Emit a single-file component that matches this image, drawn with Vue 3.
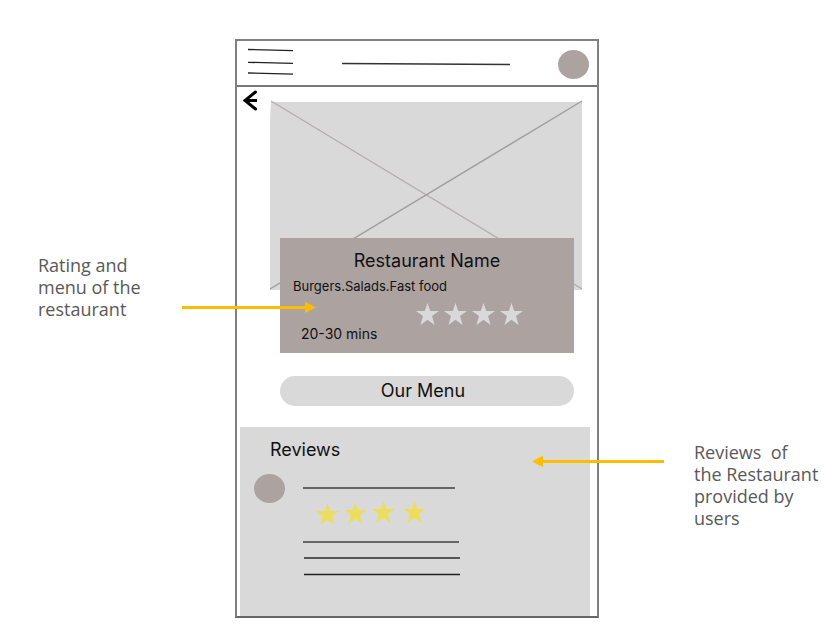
<script setup>
const heroStars = [1, 2, 3, 4]
const star = '11.5,0 14.2,8 23,8 16,13 18.6,22 11.5,16.700 4.400,22 7,13 0,8 8.800,8'
const reviewStars = [
  { x: 0, y: 2 },
  { x: 28, y: 1 },
  { x: 56, y: 0 },
  { x: 87, y: 0 },
]
</script>

<template>
  <div class="board">
    <aside class="note note-left">
      <p>Rating and<br />menu of the<br />restaurant</p>
      <svg class="arrow arrow-right" width="134" height="12" viewBox="0 0 134 12" aria-hidden="true">
        <path d="M0 5H123V0.500L134 6.500L123 12V8H0Z" fill="#fbbc04" />
      </svg>
    </aside>

    <main class="phone">
      <header class="topbar">
        <button class="menu" type="button" aria-label="Open navigation">
          <svg width="46" height="28" viewBox="0 0 46 28" fill="none" stroke="#222" stroke-width="1.3">
            <path d="M0 1.500L45 2.600M0 14.300L45 15.300M0 25L45 26.200" />
          </svg>
        </button>
        <svg class="title-line" width="168" height="4" viewBox="0 0 168 4" aria-hidden="true">
          <path d="M0 1.500L168 2.500" stroke="#333" stroke-width="1.400" />
        </svg>
        <span class="avatar"></span>
      </header>

      <section class="intro">
        <a class="back" href="#" aria-label="Back">
          <svg width="15" height="21" viewBox="0 0 15 21" fill="none" stroke="#000" stroke-width="3">
            <path d="M12.500 2L2 10.500L12.500 19" stroke-linecap="round" />
            <path d="M2 10.500H14" />
          </svg>
        </a>
        <svg class="photo" viewBox="0 0 313 190" preserveAspectRatio="none" role="img" aria-label="Restaurant photo">
          <path d="M1 2H313V190H0V20Z" fill="#d9d9d9" />
          <path d="M1 1L313 189" stroke="#b3adac" stroke-width="1.300" />
          <path d="M313 1L0 189" stroke="#a09e9e" stroke-width="1.400" />
        </svg>
      </section>

      <section class="card">
        <h1>Restaurant Name</h1>
        <p class="tags">Burgers.Salads.Fast food</p>
        <div class="rating" role="img" aria-label="Four stars">
          <svg v-for="n in heroStars" :key="n" width="23" height="22" viewBox="0 0 23 22">
            <polygon :points="star" fill="#d9d9d9" />
          </svg>
        </div>
        <p class="time">20-30 mins</p>
      </section>

      <button class="our-menu" type="button">Our Menu</button>

      <section class="reviews">
        <h2>Reviews</h2>
        <article class="review">
          <span class="avatar"></span>
          <div class="review-body">
            <hr class="name-line" />
            <svg class="review-stars" width="110" height="24" viewBox="0 0 110 24" role="img" aria-label="Four stars">
              <polygon
                v-for="s in reviewStars"
                :key="s.x"
                :points="star"
                :transform="`translate(${s.x} ${s.y})`"
                fill="#ecdd5b"
              />
            </svg>
            <svg class="copy" width="157" height="36" viewBox="0 0 157 36" fill="none" aria-hidden="true">
              <path d="M0 2H156" stroke="#666" stroke-width="2" />
              <path d="M1 18H157" stroke="#555" stroke-width="2" />
              <path d="M1 34.500H157" stroke="#222" stroke-width="1.400" />
            </svg>
          </div>
        </article>
      </section>
    </main>

    <aside class="note note-right">
      <p>Reviews&nbsp; of<br />the Restaurant<br />provided by<br />users</p>
      <svg class="arrow arrow-left" width="132" height="12" viewBox="0 0 132 12" aria-hidden="true">
        <path d="M132 5H11V0.500L0 6.500L11 12V8H132Z" fill="#fbbc04" />
      </svg>
    </aside>
  </div>
</template>

<style>
body {
  margin: 0;
  background: #fff;
}
</style>

<style scoped>
* {
  box-sizing: border-box;
}

.board {
  display: grid;
  grid-template-columns: 235fr 364px 234fr;
  align-items: start;
  padding: 39px 0 18px;
}

h1,
h2,
p {
  margin: 0;
  font-weight: 400;
}

button {
  padding: 0;
  border: 0;
  background: none;
  font: inherit;
  color: inherit;
}

svg {
  display: block;
}

.note {
  position: relative;
  z-index: 1;
  font: 300 18px/22px "Open Sans", sans-serif;
  color: #595959;
  white-space: nowrap;
}

.note-left {
  padding: 215px 0 0 38px;
}

.note-right {
  padding: 402px 0 0 95px;
}

.arrow {
  position: absolute;
}

.arrow-right {
  right: -81px;
  top: 262px;
}

.arrow-left {
  left: -67px;
  top: 416px;
}

.phone {
  border: 2px solid #808080;
  border-bottom-color: #666;
  background: #fff;
  font-family: Inter, sans-serif;
  color: #111;
}

.topbar {
  display: flex;
  align-items: center;
  justify-content: space-between;
  height: 46px;
  padding: 2px 8px 0 11px;
  border-bottom: 2px solid #777;
}

.menu {
  padding-bottom: 4px;
}

.avatar {
  flex: none;
  width: 31px;
  height: 29px;
  border-radius: 50%;
  background: #aca3a1;
}

.intro {
  display: grid;
  grid-template-columns: 27px 1fr;
  align-items: start;
  padding: 3px 15px 0 6px;
}

.photo {
  width: 100%;
  height: 190px;
  margin-top: 10px;
}

.card {
  position: relative;
  display: grid;
  height: 115px;
  margin: -52px 23px 0 43px;
  padding-top: 10px;
  grid-template-rows: 26px 24px 30px 20px;
  align-content: start;
  background: #aca3a1;
}

h1 {
  font-size: 18px;
  line-height: 26px;
  text-align: center;
}

.tags {
  padding-left: 13px;
  font-size: 13px;
  line-height: 24px;
}

.rating {
  display: flex;
  gap: 5px;
  padding: 5px 0 0 136px;
}

.time {
  padding-left: 21px;
  font-size: 14px;
  line-height: 12px;
}

.our-menu {
  display: block;
  width: calc(100% - 66px);
  height: 30px;
  margin: 23px 23px 0 43px;
  padding: 0 8px 2px 0;
  border-radius: 15px;
  background: #d9d9d9;
  font-size: 18px;
}

.reviews {
  margin: 21px 7px 0 3px;
  padding: 11px 14px 40px;
  background: #d9d9d9;
}

h2 {
  padding-left: 16px;
  font-size: 18px;
  line-height: 24px;
}

.review {
  display: flex;
  gap: 18px;
  padding-top: 12px;
}

.review-body {
  padding-top: 13px;
}

.name-line {
  width: 152px;
  margin: 0;
  border: 0;
  border-top: 2px solid #666;
}

.review-stars {
  margin: 12px 0 0 13px;
}

.copy {
  margin-top: 15px;
}
</style>
